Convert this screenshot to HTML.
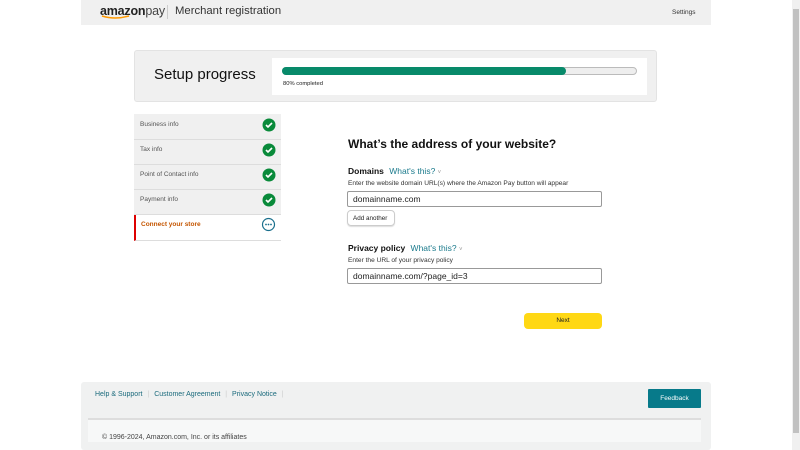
<!DOCTYPE html><html><head><style>
*{box-sizing:border-box;margin:0;padding:0}
body{width:800px;height:450px;background:#fff;font-family:"Liberation Sans",sans-serif;position:relative;overflow:hidden;color:#111}
.a{position:absolute}
</style></head><body>
<div class="a" style="left:81px;top:0;width:630px;height:25px;background:#f0f0f0"></div>
<div class="a" style="left:100px;top:4px;font-size:12.5px;font-weight:bold;color:#222;letter-spacing:-0.2px">amazon<span style="font-weight:normal;color:#444">pay</span></div>
<svg class="a" style="left:101px;top:15px" width="30" height="5"><path d="M1 1 Q14 5 28 1" stroke="#f90" stroke-width="1.5" fill="none"/></svg>
<div class="a" style="left:167px;top:5px;width:1px;height:14px;background:#ccc"></div>
<div class="a" style="left:175px;top:5px;font-size:11.3px;color:#333">Merchant registration</div>
<div class="a" style="left:672px;top:9px;font-size:6.5px;color:#333">Settings</div>
<div class="a" style="left:792px;top:0;width:8px;height:450px;background:#f0f0f0"></div>
<div class="a" style="left:793px;top:9px;width:6px;height:424px;background:#c1c1c1"></div>

<div class="a" style="left:134px;top:50px;width:523px;height:52px;background:#f0f0f0;border:1px solid #e3e3e3;border-radius:3px"></div>
<div class="a" style="left:154px;top:66px;font-size:15px;color:#111">Setup progress</div>
<div class="a" style="left:272px;top:58px;width:375px;height:37px;background:#fff"></div>
<div class="a" style="left:282px;top:67px;width:355px;height:8px;border:1px solid #bbb;border-radius:4px;background:#eee"></div>
<div class="a" style="left:282px;top:67px;width:284px;height:8px;border-radius:4px;background:#088a6a"></div>
<div class="a" style="left:283px;top:81px;font-size:5.8px;color:#222">80% completed</div>

<div class="a" style="left:134px;top:114px;width:147px;height:101px;background:#f0f0f0"></div>
<div class="a" style="left:134px;top:115px;width:147px;font-size:6.5px;color:#555">
<div style="height:25px;border-bottom:1px solid #ddd;padding:6px 6px">Business info</div>
<div style="height:25px;border-bottom:1px solid #ddd;padding:6px 6px">Tax info</div>
<div style="height:25px;border-bottom:1px solid #ddd;padding:6px 6px">Point of Contact info</div>
<div style="height:25px;border-bottom:1px solid #ddd;padding:6px 6px">Payment info</div>
<div style="height:26px;border-bottom:1px solid #ddd;padding:6px 5px;color:#c45500;font-weight:bold;border-left:2px solid #d00;background:#fff">Connect your store</div>
</div>
<svg class="a" style="left:262px;top:118px" width="14" height="100">
<g fill="#098a3a"><circle cx="7" cy="7" r="6.5"/><circle cx="7" cy="32" r="6.5"/><circle cx="7" cy="57" r="6.5"/><circle cx="7" cy="82" r="6.5"/></g>
<g stroke="#fff" stroke-width="1.6" fill="none"><path d="M4 7l2 2 4-4"/><path d="M4 32l2 2 4-4"/><path d="M4 57l2 2 4-4"/><path d="M4 82l2 2 4-4"/></g>
</svg>
<svg class="a" style="left:261px;top:217px" width="15" height="15"><circle cx="7.5" cy="7.5" r="6" stroke="#1a6f8c" stroke-width="1.2" fill="#fff"/><g fill="#1a6f8c"><circle cx="5" cy="7.5" r="0.9"/><circle cx="7.5" cy="7.5" r="0.9"/><circle cx="10" cy="7.5" r="0.9"/></g></svg>

<div class="a" style="left:348px;top:137px;font-size:12px;font-weight:bold;color:#111">What’s the address of your website?</div>
<div class="a" style="left:348px;top:166px;font-size:8.5px;font-weight:bold">Domains <span style="font-weight:normal;color:#1a7a8c;margin-left:3px">What's this? <span style="font-size:6px;color:#999">˅</span></span></div>
<div class="a" style="left:348px;top:180px;font-size:6.6px;color:#333;white-space:nowrap">Enter the website domain URL(s) where the Amazon Pay button will appear</div>
<div class="a" style="left:347px;top:191px;width:255px;height:16px;border:1px solid #999;border-radius:2px;font-size:8.5px;padding:2px 5px;color:#222">domainname.com</div>
<div class="a" style="left:347px;top:210px;width:48px;height:16px;border:1px solid #ccc;border-radius:4px;font-size:6.3px;padding:4px 5px;color:#222;box-shadow:0 1px 1px #ddd;white-space:nowrap">Add another</div>
<div class="a" style="left:348px;top:243px;font-size:8.5px;font-weight:bold">Privacy policy <span style="font-weight:normal;color:#1a7a8c;margin-left:3px">What's this? <span style="font-size:6px;color:#999">˅</span></span></div>
<div class="a" style="left:348px;top:257px;font-size:6.6px;color:#333">Enter the URL of your privacy policy</div>
<div class="a" style="left:347px;top:268px;width:255px;height:16px;border:1px solid #999;border-radius:2px;font-size:8.5px;padding:2px 5px;color:#222">domainname.com/?page_id=3</div>
<div class="a" style="left:524px;top:313px;width:78px;height:16px;background:#ffd814;border-radius:4px;font-size:6.5px;text-align:center;line-height:16px;color:#222">Next</div>

<div class="a" style="left:81px;top:382px;width:630px;height:68px;background:#f0f1f1;border-radius:3px"></div>
<div class="a" style="left:95px;top:391px;font-size:7px;color:#1a6a7c;white-space:nowrap">Help &amp; Support <span style="color:#ccc;margin:0 3px">|</span> Customer Agreement <span style="color:#ccc;margin:0 3px">|</span> Privacy Notice <span style="color:#ccc;margin:0 3px">|</span></div>
<div class="a" style="left:648px;top:389px;width:53px;height:19px;background:#077a8a;color:#fff;font-size:6.5px;text-align:center;line-height:19px;border-radius:1px">Feedback</div>
<div class="a" style="left:88px;top:418px;width:613px;height:2px;background:#ddd"></div>
<div class="a" style="left:88px;top:420px;width:613px;height:22px;background:#f7f8f8"></div>
<div class="a" style="left:102px;top:434px;font-size:7px;color:#444">© 1996-2024, Amazon.com, Inc. or its affiliates</div>
</body></html>
